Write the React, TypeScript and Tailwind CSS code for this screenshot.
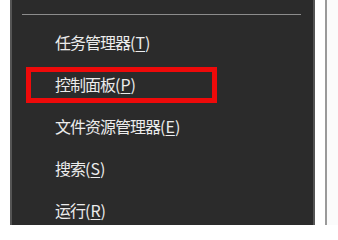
const items = [
  { label: '任务管理器', key: 'T' },
  { label: '控制面板', key: 'P', marked: true },
  { label: '文件资源管理器', key: 'E' },
  { label: '搜索', key: 'S' },
  { label: '运行', key: 'R' },
];

export default function App() {
  return (
    <div
      className="flex w-[338px] h-[225px] overflow-hidden bg-white"
      style={{ fontFamily: '"Noto Sans CJK SC", "Noto Sans", sans-serif' }}
    >
      <div className="w-[10px] shrink-0" />
      {/* Context menu */}
      <div className="w-[305px] shrink-0 bg-[#2b2b2b] border-x-2 border-[#555555] pt-[14px]">
        <div className="ml-[10px] mr-[12px] h-px bg-[#8c8c8c]" />
        <ul className="mt-[6px]">
          {items.map((item) => (
            <li
              key={item.key}
              className="relative flex h-[42px] items-center pl-[43px] text-[16px] tracking-[-1px] text-[#ececec]"
            >
              {item.marked && (
                <div className="absolute left-[14px] top-[4px] h-[36px] w-[191px] border-[5px] border-[#ee0a0a]" />
              )}
              <span className="relative">
                {item.label}
                <span className="tracking-normal">
                  (<u className="underline-offset-2">{item.key}</u>)
                </span>
              </span>
            </li>
          ))}
        </ul>
      </div>
      <div className="w-[10px] shrink-0" />
      <div className="w-[2px] shrink-0 bg-[#9a9a9a]" />
      <div className="flex-1 bg-[#fbfbfb]" />
    </div>
  );
}
